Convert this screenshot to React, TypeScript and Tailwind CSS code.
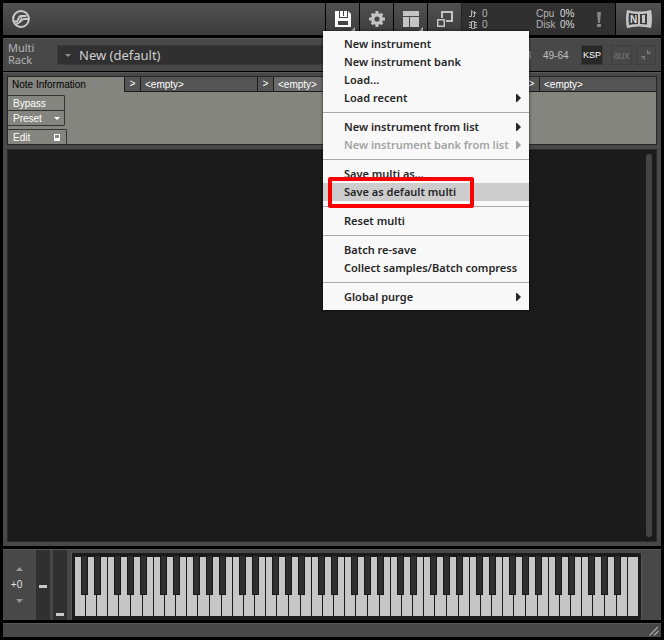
import type { ReactNode } from "react";

const pixel = 'font-["Liberation_Sans",sans-serif] text-[10px] leading-[11px]';
const raised = "bg-linear-to-b from-[#505050] to-[#3d3d3d]";

type Item = { label: string; sub?: boolean; disabled?: boolean; active?: boolean };

const groups: Item[][] = [
  [
    { label: "New instrument" },
    { label: "New instrument bank" },
    { label: "Load..." },
    { label: "Load recent", sub: true },
  ],
  [
    { label: "New instrument from list", sub: true },
    { label: "New instrument bank from list", sub: true, disabled: true },
  ],
  [{ label: "Save multi as..." }, { label: "Save as default multi", active: true }],
  [{ label: "Reset multi" }],
  [{ label: "Batch re-save" }, { label: "Collect samples/Batch compress" }],
  [{ label: "Global purge", sub: true }],
];

function MenuItem({ item }: { item: Item }) {
  return (
    <div className="relative">
      <button
        role="menuitem"
        disabled={item.disabled}
        className={`flex h-[18px] w-full items-center justify-between pr-2 pl-[21px] text-left whitespace-nowrap ${
          item.active ? "bg-[#cdcdcd]" : ""
        } ${item.disabled ? "text-[#a3a3a3]" : "text-[#262626]"}`}
      >
        {item.label}
        {item.sub && (
          <svg width="5" height="8" viewBox="0 0 5 8" fill="currentColor">
            <path d="M0 0H1L5 4L1 8H0Z" />
          </svg>
        )}
      </button>
      {item.active && (
        <span className="pointer-events-none absolute -top-1.5 left-[5px] z-10 h-[31px] w-[146px] rounded-xs border-4 border-[#fb0000]" />
      )}
    </div>
  );
}

function FileMenu() {
  return (
    <div
      role="menu"
      className='absolute top-7 -left-0.5 z-20 w-[206px] bg-[#f8f8f8] py-1 font-["Noto_Sans",sans-serif] text-[11px] leading-[18px] font-semibold shadow-[0_0_3px_rgba(0,0,0,0.7)]'
    >
      {groups.map((items, i) => (
        <div key={i} role="group">
          {i > 0 && <div className="my-[5px] h-px bg-[#a9a9a9]" />}
          {items.map((item) => (
            <MenuItem key={item.label} item={item} />
          ))}
        </div>
      ))}
    </div>
  );
}

function ToolButton({ label, corner, children }: { label: string; corner?: boolean; children: ReactNode }) {
  return (
    <button
      aria-label={label}
      className={`relative flex h-8 w-[34px] items-center justify-center border-l border-black text-[#c4c4c4] ${raised}`}
    >
      {children}
      {corner && (
        <svg className="absolute right-1 bottom-1" width="4" height="4" viewBox="0 0 4 4" fill="#b5b5b5">
          <path d="M4 0V4H0Z" />
        </svg>
      )}
    </button>
  );
}

function TopBar() {
  return (
    <header className="flex h-8">
      <div className={`flex flex-1 items-center pl-[9px] ${raised}`}>
        <svg width="18" height="18" viewBox="0 0 18 18" fill="none" stroke="#cbcbcb">
          <circle cx="9" cy="9" r="7.9" strokeWidth="2" />
          <path d="M2 11.500H4.500C6.500 11.500 6 6 9 6H14.500" strokeWidth="2" />
          <path d="M4 14.500L8.500 11.500C10 10 10.500 9 12 9H16.500" strokeWidth="1.800" />
          <path d="M7.500 12L10 6.500" strokeWidth="1.200" />
        </svg>
      </div>
      <div className="relative">
        <ToolButton label="Files" corner>
          <svg width="16" height="16" viewBox="0 0 16 16">
            <path d="M0 0H13L16 3V16H0Z" fill="#fff" />
            <path d="M4 0H5V6H12V0H13V7H4Z" fill="#444" />
            <path d="M8 0H9V5H8Z" fill="#444" />
            <path d="M3 10H13V14H3Z" fill="#444" />
          </svg>
        </ToolButton>
        <FileMenu />
      </div>
      <ToolButton label="Options">
        <svg width="16" height="16" viewBox="0 0 16 16">
          <g fill="currentColor">
            <circle cx="8" cy="8" r="6" />
            <rect x="6.500" y="0" width="3" height="16" />
            <rect x="0" y="6.500" width="16" height="3" />
            <rect x="6.500" y="0.500" width="3" height="15" transform="rotate(45 8 8)" />
            <rect x="6.500" y="0.500" width="3" height="15" transform="rotate(-45 8 8)" />
          </g>
          <circle cx="8" cy="8" r="2.600" fill="#464646" />
        </svg>
      </ToolButton>
      <ToolButton label="Workspace" corner>
        <svg width="16" height="16" viewBox="0 0 16 16" fill="currentColor">
          <path d="M0 0H16V5H0ZM0 6H6V16H0ZM7 6H16V16H7Z" />
        </svg>
      </ToolButton>
      <ToolButton label="Minimize view">
        <svg width="16" height="16" viewBox="0 0 16 16" fill="none" stroke="currentColor">
          <path d="M5 7V1H15V10H9" strokeWidth="2" />
          <rect x="0.750" y="8.750" width="6.500" height="6.500" strokeWidth="1.500" />
        </svg>
      </ToolButton>
      <div className={`flex w-[154px] items-center border-l border-[#242424] bg-[#303030] pl-[7px] text-[#b5b5b5] ${pixel}`}>
        <div className="grid w-[67px] grid-cols-[13px_1fr] items-center">
          <svg width="8" height="8" viewBox="0 0 8 8" fill="none" stroke="currentColor">
            <path d="M0 6.500H2.500V0.500L5.500 4V1.500L7.500 3.500M5.500 2V6.500H4" />
          </svg>
          <span>0</span>
          <svg width="8" height="8" viewBox="0 0 8 8" fill="none" stroke="currentColor">
            <path d="M2.500 0.500H5.500V7.500H2.500ZM0 1.500H2M0 4H2M0 6.500H2M6 1.500H8M6 4H8M6 6.500H8" />
          </svg>
          <span>0</span>
        </div>
        <div className="grid w-[61px] grid-cols-[24px_1fr]">
          <span>Cpu</span>
          <span className="text-[#dedede]">0%</span>
          <span>Disk</span>
          <span className="text-[#dedede]">0%</span>
        </div>
        <svg width="4" height="15" viewBox="0 0 4 15" fill="#858585">
          <path d="M0 0H4L3 11H1ZM0 12H4V15H0Z" />
        </svg>
      </div>
      <div className={`flex w-[46px] items-center justify-center border-l border-black ${raised}`}>
        <svg width="26" height="20" viewBox="0 0 26 20">
          <path d="M1 1Q13 4 25 1Q27 10 25 19Q13 16 1 19Q-1 10 1 1Z" fill="#c4c4c4" />
          <path d="M3 4Q7 5 12 5V15Q7 15 3 16Q2 10 3 4Z" fill="#3c3c3c" />
          <path d="M14 5Q17 5 21 4.500V15.500Q17 15 14 15Z" fill="#3c3c3c" />
          <path d="M16 6H19V14H16Z" fill="#c4c4c4" />
          <text x="7.500" y="13.500" textAnchor="middle" fontFamily="Liberation Sans" fontWeight="700" fontSize="10" fill="#dcdcdc">
            N
          </text>
        </svg>
      </div>
    </header>
  );
}

function RackBar() {
  return (
    <section className={`mt-[3px] flex h-[33px] items-center border-t border-[#585858] bg-[#484848] pr-[5px] pl-[5px] ${pixel}`}>
      <div className='w-[49px] pb-0.5 font-["Noto_Sans",sans-serif] text-[11px] leading-3 text-[#b4b4b4]'>
        <label htmlFor="multi">Multi Rack</label>
      </div>
      <div className="mr-6 flex h-5 flex-1 items-center border border-[#3b3b3b] bg-[#303030] pl-[7px]">
        <svg width="6" height="3" viewBox="0 0 6 3" fill="#909090">
          <path d="M0 0H6L3 3Z" />
        </svg>
        <select
          id="multi"
          className='ml-2 flex-1 appearance-none bg-transparent font-["Noto_Sans",sans-serif] text-[13px] leading-[18px] text-[#cfcfcf]'
        >
          <option>New (default)</option>
        </select>
      </div>
      <button className="mr-3 text-[#b8b8b8]">33-48</button>
      <button className="w-[38px] text-left text-[#c0c0c0]">49-64</button>
      <button className="mr-2 flex h-5 w-[22px] items-center justify-center border border-[#3a3a3a] bg-[#282828] text-[9px] text-white">KSP</button>
      <button className="mr-1 flex h-5 w-[21px] items-center justify-center border border-[#3e3e3e] text-[#737373]">aux</button>
      <button aria-label="Minimize all" className="flex h-5 w-5 items-center justify-center border border-[#3e3e3e]">
        <svg width="10" height="10" viewBox="0 0 10 10" fill="none" stroke="#7c7c7c">
          <path d="M6.500 0V3.500H10M6.500 3.500L9 1M0 6.500H3.500V10M3.500 6.500L1 9" />
        </svg>
      </button>
    </section>
  );
}

const tabs = [
  { name: "Note Information", style: "bg-[#84857e] text-black" },
  { name: "<empty>", style: "bg-[#545454] text-white border-b" },
  { name: "<empty>", style: "bg-[#6a6a6a] text-white border-b" },
  { name: "<empty>", style: "bg-[#545454] text-white border-b" },
  { name: "<empty>", style: "bg-[#545454] text-white border-b" },
];

function ScriptEditor() {
  return (
    <section className={`border border-[#262626] bg-[#84857e] text-white ${pixel}`}>
      <div className="flex h-[15px]">
        {tabs.map((tab, i) => (
          <div key={i} className={i === 0 ? "flex flex-1" : "flex flex-[1_1_17px]"}>
            {i > 0 && (
              <span className="w-[17px] shrink-0 border-x border-b border-[#1d1d1d] bg-[#545454] text-center leading-[13px]">&gt;</span>
            )}
            <button className={`flex-1 border-[#1d1d1d] pl-1 text-left leading-[13px] whitespace-nowrap ${tab.style}`}>{tab.name}</button>
          </div>
        ))}
      </div>
      <div className="flex h-[52px] flex-col items-start pt-[3px]">
        <button className="h-[15px] w-[57px] rounded-tr-xs border-t border-r border-[#333] pl-[5px] text-left">Bypass</button>
        <div className="flex h-4 w-[57px] items-center rounded-br-xs border-y border-r border-[#333] pr-1 pl-[5px]">
          <select aria-label="Preset" className="min-w-0 flex-1 appearance-none leading-[11px]">
            <option>Preset</option>
          </select>
          <svg width="6" height="3" viewBox="0 0 6 3" fill="#fff">
            <path d="M0 0H6L3 3Z" />
          </svg>
        </div>
        <button className="mt-[3px] flex h-[15px] w-[59px] items-center justify-between rounded-tr-xs border-t border-r border-[#333] pr-1.5 pl-[5px]">
          Edit
          <svg width="6" height="7" viewBox="0 0 6 7" fill="#fff">
            <path fillRule="evenodd" d="M0 0H6V7H0ZM1 1V4H5V1Z" />
          </svg>
        </button>
      </div>
    </section>
  );
}

/* White key widths of one octave, each including its one pixel gap. */
const whites = ["w-[11px]", "w-[11px]", "w-[11px]", "w-[11px]", "w-[12px]", "w-[12px]", "w-[11px]"];
const blacks = ["left-[6px]", "left-[19px]", "left-[39px]", "left-[52px]", "left-[65px]"];

function Keys() {
  return (
    <div className="flex h-[59px]">
      {Array.from({ length: 7 }, (_, octave) => (
        <div key={octave} className="relative flex">
          {whites.map((w, i) => (
            <span key={i} className={`${w} border-r border-[#1b1b1b] bg-[#c6c6c6]`} />
          ))}
          {blacks.map((left) => (
            <span key={left} className={`absolute -top-px h-[39px] w-[7px] border border-t-0 border-[#171717] bg-[#2f2f2f] ${left}`} />
          ))}
        </div>
      ))}
      <span className="w-2.5 bg-[#c6c6c6]" />
    </div>
  );
}

function Wheel({ label, value }: { label: string; value: number }) {
  return (
    <div className="mr-[3px] flex h-full w-3.5 justify-center bg-[#303030] pt-[7px] pb-1">
      <input
        type="range"
        aria-label={label}
        defaultValue={value}
        className="h-full w-2 appearance-none bg-transparent [direction:rtl] [writing-mode:vertical-lr] [&::-webkit-slider-thumb]:h-[3px] [&::-webkit-slider-thumb]:w-2 [&::-webkit-slider-thumb]:appearance-none [&::-webkit-slider-thumb]:bg-[#cacaca]"
      />
    </div>
  );
}

function Keyboard() {
  return (
    <section className="mt-[3px] flex h-[71px] border-t border-[#585858] bg-[#484848]">
      <div className={`flex w-[33px] flex-col items-center justify-center gap-1 pr-1.5 text-[#e0e0e0] ${pixel}`}>
        <button aria-label="Octave up" className="flex h-3 items-center pl-1.5">
          <svg width="7" height="4" viewBox="0 0 7 4" fill="#959595">
            <path d="M0 4L3.500 0L7 4Z" />
          </svg>
        </button>
        <span className="leading-3">+0</span>
        <button aria-label="Octave down" className="flex h-3 items-center pl-1.5">
          <svg width="7" height="4" viewBox="0 0 7 4" fill="#959595">
            <path d="M0 0H7L3.500 4Z" />
          </svg>
        </button>
      </div>
      <Wheel label="Pitch bend" value={50} />
      <Wheel label="Modulation" value={0} />
      <div className="mt-[3px] ml-px border-x border-[#585858] bg-[#1b1b1b] px-[3px] pt-1">
        <Keys />
      </div>
    </section>
  );
}

export default function App() {
  return (
    <main className="flex min-h-screen flex-col bg-black p-[3px]">
      <TopBar />
      <RackBar />
      <div className="mt-px flex flex-1 flex-col border-t border-[#585858] bg-[#484848] p-1 pt-[3px]">
        <ScriptEditor />
        <div className="mt-1 flex flex-1 justify-end border border-[#2b2b2b] bg-[#1b1b1b] py-1 pr-1">
          <div className="w-1.5 rounded-full bg-[#444]" />
        </div>
      </div>
      <Keyboard />
      <footer className="mt-[3px] flex h-3.5 items-center justify-end border-t border-[#585858] bg-[#484848] pr-0.5">
        <svg width="10" height="10" viewBox="0 0 10 10" stroke="#a5a5a5" strokeWidth="1.300">
          <path d="M0.500 9.500L9 1M5 9.500L9.500 5" />
        </svg>
      </footer>
    </main>
  );
}
